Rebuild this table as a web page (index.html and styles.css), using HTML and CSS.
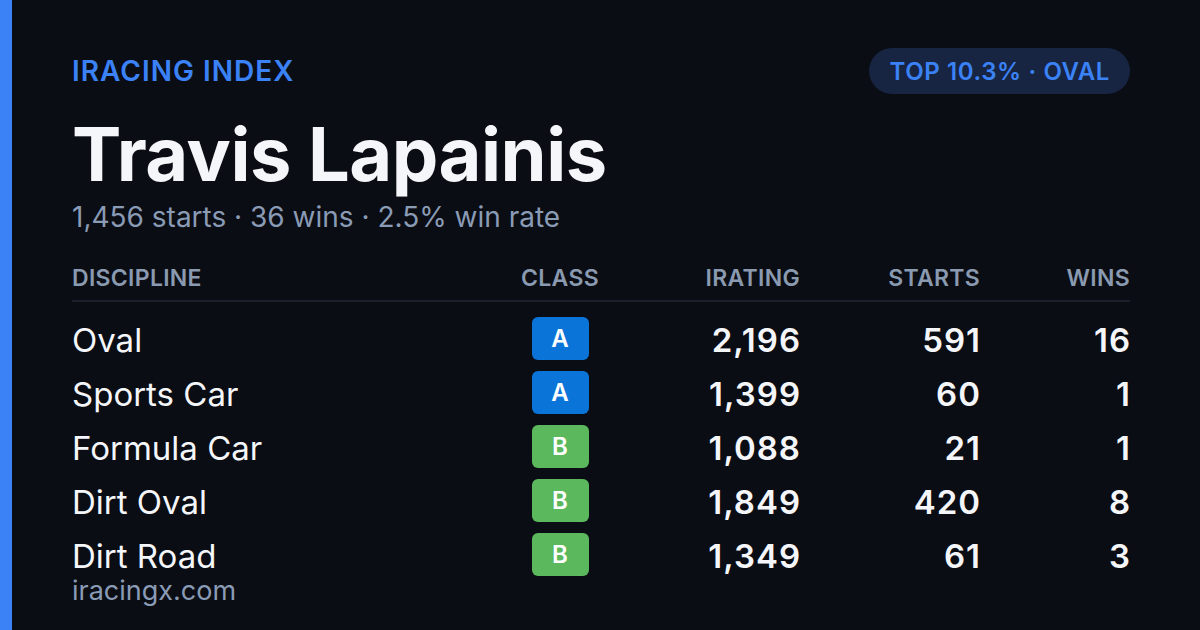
FILE: index.html
```html
<!DOCTYPE html>
<html>
<head>
<meta charset="utf-8">
<link rel="stylesheet" href="styles.css">
</head>
<body>
<div class="card">
  <div class="accent"></div>
  <main class="content">
    <div class="top">
      <div class="label">IRACING INDEX</div>
      <div class="pill">TOP 10.3% · OVAL</div>
    </div>
    <h1 class="name">Travis Lapainis</h1>
    <div class="summary">1,456 starts · 36 wins · 2.5% win rate</div>
    <div class="table">
      <div class="row head">
        <div class="c-disc">DISCIPLINE</div>
        <div class="c-class">CLASS</div>
        <div class="c-num">IRATING</div>
        <div class="c-num">STARTS</div>
        <div class="c-num">WINS</div>
      </div>
      <div class="row">
        <div class="c-disc">Oval</div>
        <div class="c-class"><span class="badge a">A</span></div>
        <div class="c-num">2,196</div>
        <div class="c-num">591</div>
        <div class="c-num">16</div>
      </div>
      <div class="row">
        <div class="c-disc">Sports Car</div>
        <div class="c-class"><span class="badge a">A</span></div>
        <div class="c-num">1,399</div>
        <div class="c-num">60</div>
        <div class="c-num">1</div>
      </div>
      <div class="row">
        <div class="c-disc">Formula Car</div>
        <div class="c-class"><span class="badge b">B</span></div>
        <div class="c-num">1,088</div>
        <div class="c-num">21</div>
        <div class="c-num">1</div>
      </div>
      <div class="row">
        <div class="c-disc">Dirt Oval</div>
        <div class="c-class"><span class="badge b">B</span></div>
        <div class="c-num">1,849</div>
        <div class="c-num">420</div>
        <div class="c-num">8</div>
      </div>
      <div class="row">
        <div class="c-disc">Dirt Road</div>
        <div class="c-class"><span class="badge b">B</span></div>
        <div class="c-num">1,349</div>
        <div class="c-num">61</div>
        <div class="c-num">3</div>
      </div>
    </div>
    <div class="footer">iracingx.com</div>
  </main>
</div>
</body>
</html>
```

FILE: styles.css
```css
html, body {
  margin: 0;
  padding: 0;
  background: #0a0d14;
}
body {
  width: 1200px;
  height: 630px;
  overflow: hidden;
  font-family: "Inter", "Noto Sans", sans-serif;
}
.card {
  display: flex;
  width: 1200px;
  height: 630px;
  background: #0a0d14;
}
.accent {
  width: 12px;
  flex: none;
  background: #3b82f6;
}
.content {
  flex: 1;
  padding: 48px 70px 0 60px;
  display: flex;
  flex-direction: column;
}
.top {
  display: flex;
  justify-content: space-between;
  align-items: center;
  height: 46px;
}
.label {
  color: #3b82f6;
  font-size: 28px;
  font-weight: 600;
  letter-spacing: 1px;
}
.pill {
  height: 46px;
  box-sizing: border-box;
  padding: 0 20px 0 21px;
  border-radius: 23px;
  background: #172542;
  color: #3b82f6;
  font-size: 24px;
  font-weight: 600;
  letter-spacing: 0.6px;
  display: flex;
  align-items: center;
}
.name {
  margin: 15px 0 0;
  color: #f5f6fa;
  font-size: 74px;
  line-height: 90px;
  font-weight: 700;
  letter-spacing: -0.5px;
}
.summary {
  color: #8a9bb5;
  font-size: 28px;
  line-height: 34px;
  margin-top: 1px;
}
.table {
  margin-top: 30px;
}
.row {
  display: grid;
  grid-template-columns: 428px 120px 180px 180px 150px;
  align-items: center;
  height: 54px;
  color: #f5f6fa;
  font-size: 33px;
}
.row.head {
  height: 36px;
  border-bottom: 2px solid #1b1f2b;
  margin-bottom: 11px;
  color: #8a9ab0;
  font-size: 23px;
  font-weight: 600;
  letter-spacing: 0.3px;
  align-items: start;
}
.c-class {
  text-align: center;
}
.row:not(.head) .c-class {
  display: flex;
  justify-content: center;
  margin-bottom: 4px;
}
.c-num {
  text-align: right;
  font-weight: 600;
}
.row:not(.head) .c-num {
  letter-spacing: 1px;
  margin-right: -1px;
}
.badge {
  display: inline-flex;
  align-items: center;
  justify-content: center;
  width: 57px;
  height: 43px;
  border-radius: 6px;
  color: #ffffff;
  font-size: 24px;
  font-weight: 600;
  letter-spacing: 0;
}
.badge.a { background: #0b74d8; }
.badge.b { background: #5cb85c; }
.footer {
  color: #8a9bb5;
  font-size: 27px;
  line-height: 30px;
  margin-top: -7px;
}
```
